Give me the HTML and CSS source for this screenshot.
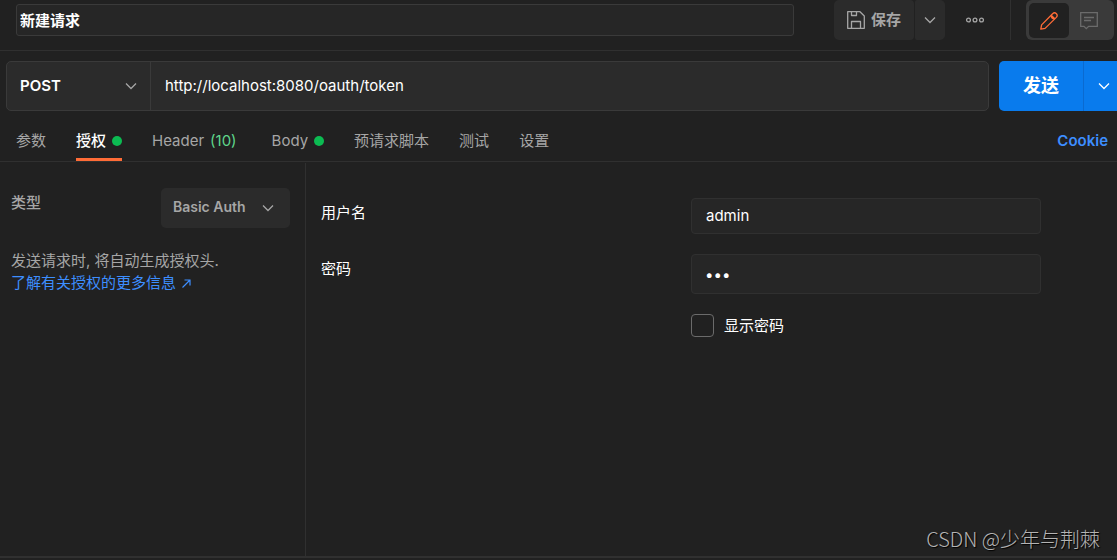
FILE: index.html
```html
<!DOCTYPE html>
<html lang="zh-CN">
<head>
<meta charset="utf-8">
<meta name="viewport" content="width=device-width, initial-scale=1">
<title>新建请求</title>
<link rel="stylesheet" href="styles.css">
</head>
<body>
<div class="app">
  <header class="topbar">
    <input class="title-input" type="text" value="新建请求" aria-label="请求名称">
    <div class="save-group">
      <button class="save-btn" type="button">
        <svg class="icon-save" viewBox="0 0 18 18" width="18" height="18" fill="none" stroke="currentColor" stroke-width="1.3" stroke-linejoin="round" aria-hidden="true">
          <path d="M0.7 0.7H13L17.3 5V17.3H0.7Z"/><path d="M4.5 0.7V4.5H9.5V0.7"/><path d="M4.5 17.3V10.5H13.5V17.3"/>
        </svg>
        <span>保存</span>
      </button>
      <button class="save-more" type="button" aria-label="更多保存选项">
        <svg viewBox="0 0 12 8" width="12" height="8" class="chevron" aria-hidden="true"><path d="M1 1.5L6 6.5L11 1.5"/></svg>
      </button>
    </div>
    <button class="dots-btn" type="button" aria-label="更多">
      <svg viewBox="0 0 18 6" width="18" height="6" fill="none" stroke="currentColor" stroke-width="1.3" aria-hidden="true"><circle cx="2.5" cy="3" r="1.9"/><circle cx="9" cy="3" r="1.9"/><circle cx="15.5" cy="3" r="1.9"/></svg>
    </button>
    <div class="toggle-area">
      <div class="toggle">
        <button class="toggle-btn toggle-active" type="button" aria-label="编辑">
          <svg viewBox="0 0 18 18" width="18" height="18" fill="none" stroke="currentColor" stroke-width="1.3" stroke-linejoin="round" aria-hidden="true">
            <path d="M0.8 17.2L1.6 12.9L12.6 1.7C13.8 0.6 15.3 0.6 16.4 1.7C17.4 2.8 17.4 4.2 16.3 5.4L5.1 16.4Z"/><path d="M11.2 3.2C11 5.6 12.4 7 14.8 6.8M11.2 3.2L14.8 6.8"/>
          </svg>
        </button>
        <button class="toggle-btn" type="button" aria-label="评论">
          <svg viewBox="0 0 18 18" width="18" height="18" fill="none" stroke="currentColor" stroke-width="1.3" aria-hidden="true">
            <path d="M0.7 0.7H17.3V14.3H8.6L6.3 16.6L4 14.3H0.7Z"/><path d="M4 5.5H14M4 8.5H11"/>
          </svg>
        </button>
      </div>
    </div>
  </header>

  <form class="request-row">
    <div class="request-box">
      <div class="select-wrap method">
        <select class="method-select" aria-label="请求方法"><option>POST</option><option>GET</option></select>
        <svg viewBox="0 0 12 8" width="12" height="8" class="chevron" aria-hidden="true"><path d="M1 1.5L6 6.5L11 1.5"/></svg>
      </div>
      <input class="url-input" type="text" value="http://localhost:8080/oauth/token" aria-label="请求地址">
    </div>
    <div class="send-group">
      <button class="send-btn" type="button">发送</button>
      <button class="send-more" type="button" aria-label="更多发送选项">
        <svg viewBox="0 0 12 8" width="12" height="8" class="chevron" aria-hidden="true"><path d="M1 1.5L6 6.5L11 1.5"/></svg>
      </button>
    </div>
  </form>

  <nav class="tabs">
    <button class="tab" type="button">参数</button>
    <button class="tab tab-active" type="button">授权<span class="dot"></span></button>
    <button class="tab tab-header" type="button">Header <span class="count">(10)</span></button>
    <button class="tab" type="button">Body<span class="dot"></span></button>
    <button class="tab" type="button">预请求脚本</button>
    <button class="tab" type="button">测试</button>
    <button class="tab" type="button">设置</button>
    <a class="cookie-link" href="#">Cookie</a>
  </nav>

  <main class="panel">
    <section class="auth-type">
      <div class="type-row">
        <label class="type-label" for="auth-type">类型</label>
        <div class="select-wrap auth">
          <select class="auth-select" id="auth-type"><option>Basic Auth</option></select>
          <svg viewBox="0 0 12 8" width="12" height="8" class="chevron" aria-hidden="true"><path d="M1 1.5L6 6.5L11 1.5"/></svg>
        </div>
      </div>
      <p class="hint">发送请求时, 将自动生成授权头.<br>
        <a class="learn-link" href="#">了解有关授权的更多信息<svg class="icon-out" viewBox="0 0 9 9" width="9" height="9" fill="none" stroke="currentColor" stroke-width="1.2" aria-hidden="true"><path d="M0.5 8.5L8 1M2.5 1H8V6.5"/></svg></a>
      </p>
    </section>
    <section class="auth-form">
      <div class="field">
        <label for="username">用户名</label>
        <input class="text-input" id="username" type="text" value="admin">
      </div>
      <div class="field">
        <label for="password">密码</label>
        <input class="text-input password-input" id="password" type="password" value="123">
      </div>
      <div class="check-row">
        <input class="checkbox" id="show-password" type="checkbox">
        <label for="show-password">显示密码</label>
      </div>
    </section>
  </main>
  <footer class="footer"></footer>
  <div class="watermark">CSDN @少年与荆棘</div>
</div>
</body>
</html>
```
FILE: styles.css
```css
* {
  box-sizing: border-box;
}

body {
  margin: 0;
  background: #212121;
  color: #ffffff;
  font-family: Inter, "Noto Sans CJK SC", sans-serif;
  font-size: 15px;
  line-height: 22px;
  overflow: hidden;
}

button,
input,
select {
  font: inherit;
  color: inherit;
  margin: 0;
  padding: 0;
  border: 0;
  background: none;
  outline: none;
}

button {
  cursor: pointer;
}

svg {
  display: block;
}

a {
  text-decoration: none;
}

.chevron {
  fill: none;
  stroke: currentColor;
  stroke-width: 1.3;
}

.app {
  display: flex;
  flex-direction: column;
  min-height: 100vh;
  position: relative;
}

/* Top bar */
.topbar {
  display: flex;
  align-items: flex-start;
  padding: 0 3px 10px 16px;
  border-bottom: 1px solid #303030;
}

.title-input {
  flex: 1;
  min-width: 0;
  height: 32px;
  margin: 4px 40px 0 0;
  padding: 0 3px 2px;
  background: #262626;
  border: 1px solid #3a3a3a;
  border-radius: 3px;
  font-weight: 700;
}

.save-group {
  display: flex;
  gap: 1px;
  color: #a6a6a6;
}

.save-btn,
.save-more {
  display: flex;
  align-items: center;
  justify-content: center;
  height: 40px;
  background: #2b2b2b;
}

.save-btn {
  gap: 6px;
  width: 80px;
  border-radius: 5px 4px 4px 5px;
  font-weight: 600;
}

.save-more {
  width: 30px;
  border-radius: 2px 5px 5px 2px;
}

.dots-btn {
  display: flex;
  align-items: center;
  justify-content: center;
  width: 60px;
  height: 40px;
  color: #a6a6a6;
}

.toggle-area {
  margin-left: 5px;
  padding-left: 15px;
  border-left: 1px solid #303030;
}

.toggle {
  display: flex;
  padding: 3px 5px 2px 3px;
  height: 40px;
  background: #3a3a3a;
  border-radius: 6px;
}

.toggle-btn {
  display: flex;
  align-items: center;
  justify-content: center;
  width: 40px;
  border-radius: 5px;
  color: #6b6b6b;
}

.toggle-active {
  background: #212121;
  color: #ff6c37;
}

/* Request row */
.request-row {
  display: flex;
  gap: 10px;
  padding: 10px 0 0 6px;
}

.request-box {
  display: flex;
  flex: 1;
  min-width: 0;
  height: 50px;
  background: #2b2b2b;
  border: 1px solid #3a3a3a;
  border-radius: 5px;
}

.select-wrap {
  display: grid;
  align-items: center;
}

.select-wrap > * {
  grid-area: 1 / 1;
}

.select-wrap .chevron {
  justify-self: end;
  pointer-events: none;
  color: #a6a6a6;
}

.select-wrap select {
  appearance: none;
  width: 100%;
  height: 100%;
  font-weight: 600;
}

.method {
  width: 144px;
  border-right: 1px solid #3a3a3a;
}

.method .chevron {
  margin-right: 13px;
}

.method-select {
  padding-left: 13px;
}

.url-input {
  flex: 1;
  min-width: 0;
  padding: 0 14px;
}

.send-group {
  display: flex;
}

.send-btn {
  width: 85px;
  background: #097bed;
  border-right: 1px solid #0a6ad0;
  border-radius: 5px 0 0 5px;
  font-size: 18px;
  font-weight: 700;
}

.send-more {
  display: flex;
  align-items: center;
  justify-content: flex-end;
  width: 33px;
  padding-right: 7px;
  background: #097bed;
}

/* Tabs */
.tabs {
  display: flex;
  align-items: stretch;
  gap: 30px;
  height: 51px;
  padding: 0 9px 0 16px;
  border-bottom: 1px solid #303030;
}

.tab {
  display: flex;
  align-items: center;
  gap: 6px;
  padding-top: 12px;
  border-bottom: 3px solid transparent;
  color: #a6a6a6;
}

.tab-active {
  border-bottom-color: #ff6c37;
  color: #ffffff;
  font-weight: 500;
}

.tab-header {
  margin-right: 5px;
}

.count {
  color: #5fd68b;
}

.dot {
  width: 10px;
  height: 10px;
  border-radius: 50%;
  background: #0cbb52;
}

.cookie-link {
  align-self: center;
  margin-left: auto;
  padding-top: 10px;
  color: #3d8eff;
  font-weight: 600;
}

/* Authorization panel */
.panel {
  display: flex;
  flex: 1;
  padding-top: 1px;
}

.auth-type {
  width: 306px;
  padding: 25px 15px 0 11px;
  border-right: 1px solid #303030;
  color: #a6a6a6;
}

.type-row {
  display: flex;
  align-items: flex-start;
  justify-content: space-between;
}

.type-label {
  padding-top: 4px;
  font-weight: 500;
}

.auth {
  width: 129px;
  height: 40px;
  background: #2b2b2b;
  border-radius: 5px;
}

.auth-select {
  padding: 0 0 2px 12px;
  font-size: 14px;
}

.auth .chevron {
  margin-right: 16px;
}

.hint {
  margin: 22px 0 0;
}

.learn-link {
  display: inline-flex;
  align-items: center;
  gap: 6px;
  color: #3d8eff;
}

.auth-form {
  display: flex;
  flex: 1;
  flex-direction: column;
  gap: 20px;
  padding: 35px 76px 0 15px;
}

.field {
  display: flex;
  align-items: flex-start;
  justify-content: space-between;
}

.field label {
  padding-top: 4px;
}

.text-input {
  width: 350px;
  height: 36px;
  padding: 0 14px 2px;
  background: #262626;
  border: 1px solid #303030;
  border-radius: 4px;
}

.password-input {
  height: 40px;
  padding: 0 13px;
}

.check-row {
  display: flex;
  align-items: center;
  gap: 10px;
  width: 350px;
  margin-left: auto;
}

.checkbox {
  appearance: none;
  width: 23px;
  height: 23px;
  border: 1px solid #6b6b6b;
  border-radius: 4px;
}

.checkbox:checked {
  background: #ff6c37;
}

.footer {
  height: 4px;
  border-top: 2px solid #303030;
}

.watermark {
  position: absolute;
  right: 17px;
  bottom: 6px;
  color: #b4b4b4;
  font-family: "Noto Sans CJK SC", sans-serif;
  font-size: 20px;
  font-weight: 300;
  line-height: 30px;
  text-shadow: 1px 1px 1px #000000;
}
```
